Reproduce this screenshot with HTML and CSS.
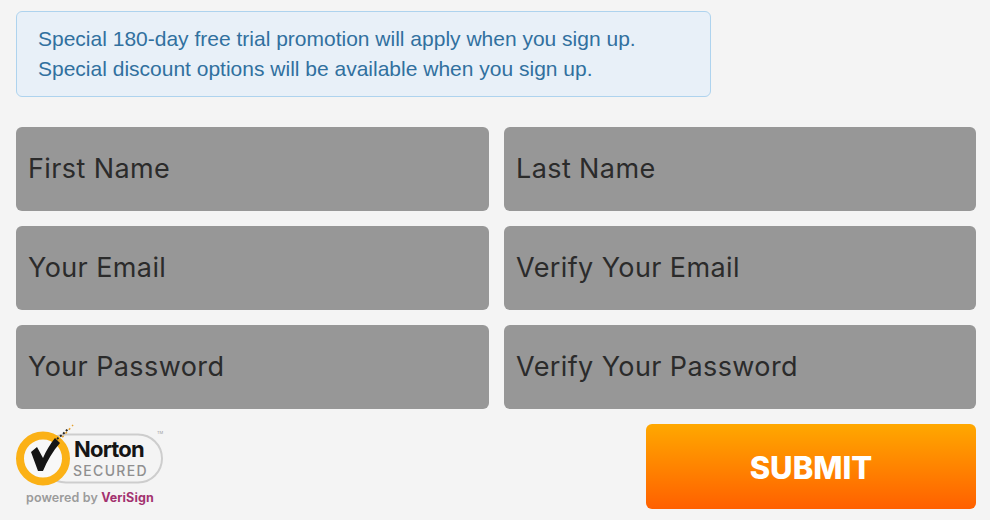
FILE: index.html
```html
<!DOCTYPE html>
<html lang="en">
<head>
    <meta charset="UTF-8">
    <meta name="viewport" content="width=device-width, initial-scale=1.0">
    <title>Sign Up</title>
    <link rel="stylesheet" href="styles.css">
</head>
<body>
    <div class="notice">
        <p>Special 180-day free trial promotion will apply when you sign up.</p>
        <p>Special discount options will be available when you sign up.</p>
    </div>

    <form class="signup-form">
        <div class="field-grid">
            <input class="field" type="text" placeholder="First Name">
            <input class="field" type="text" placeholder="Last Name">
            <input class="field" type="text" placeholder="Your Email">
            <input class="field" type="text" placeholder="Verify Your Email">
            <input class="field" type="text" placeholder="Your Password">
            <input class="field" type="text" placeholder="Verify Your Password">
        </div>

        <div class="form-footer">
            <!-- Norton badge -->
            <svg class="norton" width="150" height="86" viewBox="0 0 150 86">
                <rect x="26" y="12.5" width="120" height="48" rx="24" fill="#f4f4f4" stroke="#cdcdcd" stroke-width="2"/>
                <circle cx="27" cy="36.5" r="23" fill="#f8f8f8" stroke="#fbb116" stroke-width="8"/>
                <path d="M15 30 L21 25 L27 36 C30 29 34 22 39 16 L44 21 C37 29 31 39 27 49 L22 49 Z" fill="#151515"/>
                <path d="M41 17 L47 12 L52 7" fill="none" stroke="#222" stroke-width="2" stroke-dasharray="2 2"/>
                <path d="M43 19 L49 12 L57 3" fill="none" stroke="#e5a02c" stroke-width="1.6" stroke-dasharray="2 3"/>
                <text class="norton-name" x="58" y="34.5">Norton</text>
                <text class="norton-secured" x="57" y="54">SECURED</text>
                <text class="norton-tm" x="141" y="12">TM</text>
                <text class="norton-powered" x="10" y="80">powered by <tspan class="norton-verisign">VeriSign</tspan></text>
            </svg>
            <button class="submit-btn" type="button">SUBMIT</button>
        </div>
    </form>
</body>
</html>
```

FILE: styles.css
```css
body {
    margin: 0;
    padding: 11px 14px 0 16px;
    background: #f4f4f4;
    font-family: "Liberation Sans", Arial, sans-serif;
}

.notice {
    width: 695px;
    height: 86px;
    box-sizing: border-box;
    padding: 12px 21px;
    background: #e8f0f8;
    border: 1px solid #aed3ee;
    border-radius: 6px;
    color: #31709f;
    font-size: 21px;
    line-height: 30px;
}

.notice p {
    margin: 0;
}

.signup-form {
    margin-top: 30px;
}

.field-grid {
    display: grid;
    grid-template-columns: 473px 472px;
    grid-auto-rows: 84px;
    gap: 15px;
}

.field {
    box-sizing: border-box;
    width: 100%;
    padding: 0 12px 2px;
    background: #979797;
    border: none;
    border-radius: 6px;
    color: #2b2b2b;
    font-family: Inter, sans-serif;
    font-size: 27px;
    letter-spacing: 0.4px;
    outline: none;
}

.field::placeholder {
    color: #2b2b2b;
    opacity: 1;
}

.form-footer {
    display: flex;
    justify-content: space-between;
    margin-top: 13px;
}

.norton {
    font-family: Inter, sans-serif;
}

.norton-name {
    font-size: 22px;
    font-weight: 700;
    letter-spacing: -0.8px;
    fill: #151515;
}

.norton-secured {
    font-size: 14px;
    font-weight: 500;
    letter-spacing: 1.3px;
    fill: #8f8f8f;
}

.norton-tm {
    font-size: 4px;
    fill: #999;
}

.norton-powered {
    font-size: 12.5px;
    font-weight: 600;
    letter-spacing: 0.1px;
    fill: #9b9b9b;
}

.norton-verisign {
    font-weight: 700;
    fill: #a3326f;
}

.submit-btn {
    width: 330px;
    height: 85px;
    margin-top: 2px;
    padding-top: 2px;
    background: linear-gradient(#ffa800, #ff6000);
    border: none;
    border-radius: 6px;
    color: #fff;
    font-family: Inter, sans-serif;
    font-size: 31px;
    font-weight: 800;
    cursor: pointer;
}
```
